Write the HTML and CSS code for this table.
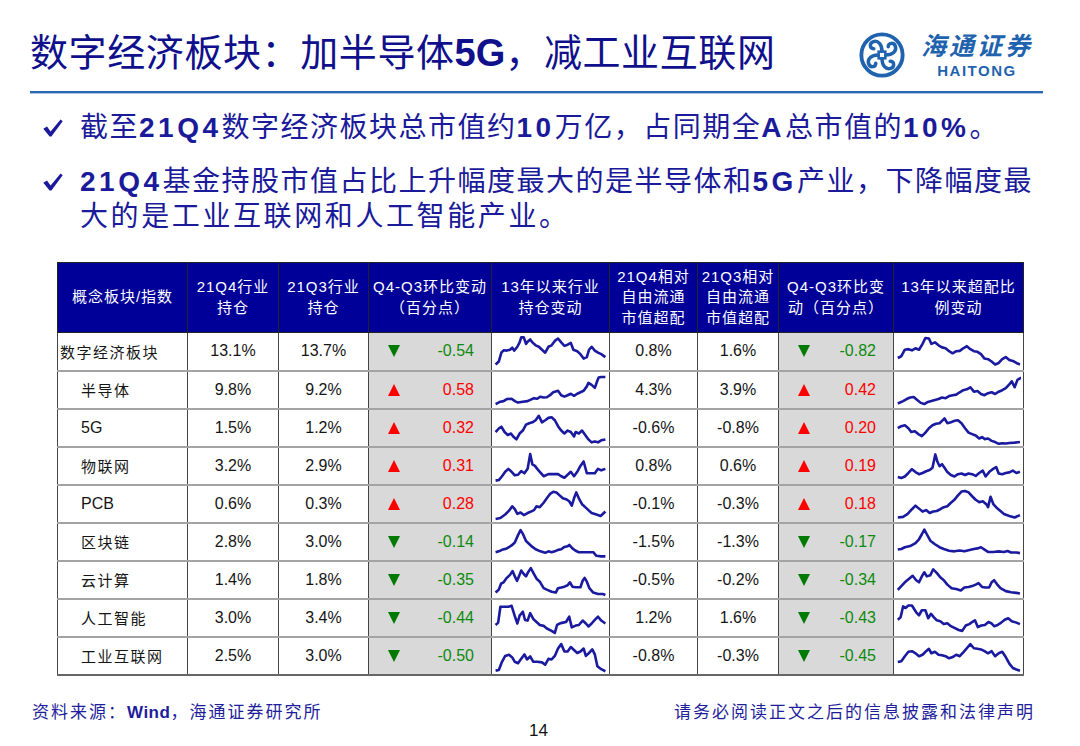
FILE: index.html
```html
<!DOCTYPE html>
<html lang="zh-CN">
<head>
<meta charset="utf-8">
<title>数字经济板块</title>
<link rel="stylesheet" href="styles.css">
</head>
<body>
<div class="slide">
  <header class="header">
    <h1 class="title">数字经济板块：加半导体<b>5G</b>，减工业互联网</h1>
    <div class="logo">
      <svg class="logo-mark" viewBox="0 0 50 50" width="48" height="48">
        <defs>
          <path id="arm" d="M25 21 C25 14 21 9.5 16 11 C11.5 12.5 12 18.5 16.5 18.5" fill="none" stroke="#1f63ae" stroke-width="3.6" stroke-linecap="round"/>
        </defs>
        <circle cx="25" cy="25" r="21.5" fill="none" stroke="#1f63ae" stroke-width="4"/>
        <use href="#arm"/>
        <use href="#arm" transform="rotate(90 25 25)"/>
        <use href="#arm" transform="rotate(180 25 25)"/>
        <use href="#arm" transform="rotate(270 25 25)"/>
        <rect x="21.5" y="21.5" width="7" height="7" fill="none" stroke="#1f63ae" stroke-width="2.6"/>
      </svg>
      <div class="logo-text">
        <div class="logo-cn">海通证券</div>
        <div class="logo-en">HAITONG</div>
      </div>
    </div>
  </header>
  <div class="rule"></div>

  <ul class="points">
    <li class="point">
      <svg class="check" viewBox="0 0 20 18" width="20" height="18"><path d="M0.3 9.8 L4 7.6 L7.6 12.6 L17.6 0.6 L19.7 2.2 L8.4 17.6 L6.6 17.6 Z" fill="#1a1a9a"/></svg>
      <p class="point-text">截至<span class="en">21Q4</span>数字经济板块总市值约<span class="en">10</span>万亿，占同期全<span class="en">A</span>总市值的<span class="en">10%</span>。</p>
    </li>
    <li class="point">
      <svg class="check" viewBox="0 0 20 18" width="20" height="18"><path d="M0.3 9.8 L4 7.6 L7.6 12.6 L17.6 0.6 L19.7 2.2 L8.4 17.6 L6.6 17.6 Z" fill="#1a1a9a"/></svg>
      <p class="point-text"><span class="en">21Q4</span>基金持股市值占比上升幅度最大的是半导体和<span class="en">5G</span>产业，下降幅度最<br><span class="wide">大的是工业互联网和人工智能产业。</span></p>
    </li>
  </ul>

  <table class="grid">
    <colgroup>
      <col class="c1"><col class="c2"><col class="c3"><col class="c4"><col class="c5">
      <col class="c6"><col class="c7"><col class="c8"><col class="c9">
    </colgroup>
    <thead>
      <tr>
        <th>概念板块/指数</th>
        <th>21Q4行业<br>持仓</th>
        <th>21Q3行业<br>持仓</th>
        <th>Q4-Q3环比变动<br>（百分点）</th>
        <th>13年以来行业<br>持仓变动</th>
        <th>21Q4相对<br>自由流通<br>市值超配</th>
        <th>21Q3相对<br>自由流通<br>市值超配</th>
        <th>Q4-Q3环比变<br>动（百分点）</th>
        <th>13年以来超配比<br>例变动</th>
      </tr>
    </thead>
    <tbody>
      <tr>
        <td class="name top">数字经济板块</td><td>13.1%</td><td>13.7%</td>
        <td class="chg"><div class="chg-in"><i class="tri down"></i><span class="neg">-0.54</span></div></td>
        <td class="spark"><svg viewBox="35 0 353 112" preserveAspectRatio="none"><polyline points="40,100 50,90 58,60 65,52 75,53 85,50 92,43 98,53 108,40 115,25 120,8 128,8 135,30 140,23 148,15 155,25 165,35 175,40 185,50 195,60 205,40 215,35 225,20 235,12 245,25 255,37 265,33 275,27 283,50 295,55 305,65 315,80 325,75 332,50 340,40 350,53 360,60 370,65 383,75"/></svg></td>
        <td>0.8%</td><td>1.6%</td>
        <td class="chg"><div class="chg-in"><i class="tri down"></i><span class="neg">-0.82</span></div></td>
        <td class="spark"><svg viewBox="35 0 353 112" preserveAspectRatio="none"><polyline points="40,78 50,72 60,50 70,48 80,52 90,45 100,50 110,30 118,10 128,12 135,30 145,25 155,35 165,42 175,45 185,55 195,62 205,55 215,54 225,45 235,38 245,48 255,55 265,57 275,65 285,80 295,82 305,90 315,100 325,95 335,82 345,75 355,85 365,88 375,95 385,100"/></svg></td>
      </tr>
      <tr>
        <td class="name">半导体</td><td>9.8%</td><td>9.2%</td>
        <td class="chg"><div class="chg-in"><i class="tri up"></i><span class="pos">0.58</span></div></td>
        <td class="spark"><svg viewBox="35 0 353 112" preserveAspectRatio="none"><polyline points="40,102 55,94 65,92 75,85 90,84 100,92 110,97 125,94 140,92 150,87 160,82 170,84 180,77 190,80 200,79 210,72 220,62 235,57 245,72 255,77 265,72 275,67 285,74 295,67 305,62 315,57 325,42 330,30 340,37 350,47 358,22 362,12 370,10 383,10"/></svg></td>
        <td>4.3%</td><td>3.9%</td>
        <td class="chg"><div class="chg-in"><i class="tri up"></i><span class="pos">0.42</span></div></td>
        <td class="spark"><svg viewBox="35 0 353 112" preserveAspectRatio="none"><polyline points="40,100 55,92 65,85 75,80 85,78 95,88 105,98 115,102 125,95 135,92 145,88 155,85 165,80 175,82 185,75 195,72 205,70 215,62 225,55 235,52 245,45 255,60 265,58 275,68 285,72 295,65 305,62 315,68 325,60 335,55 345,48 355,35 362,25 370,45 378,20 385,15 390,12"/></svg></td>
      </tr>
      <tr>
        <td class="name latin">5G</td><td>1.5%</td><td>1.2%</td>
        <td class="chg"><div class="chg-in"><i class="tri up"></i><span class="pos">0.32</span></div></td>
        <td class="spark"><svg viewBox="35 0 353 112" preserveAspectRatio="none"><polyline points="40,68 50,56 58,50 68,68 78,78 88,73 95,83 105,93 115,73 125,63 135,43 145,38 155,35 165,28 175,13 185,35 195,28 205,20 215,18 225,28 235,48 245,63 255,73 265,63 275,68 285,83 290,68 300,73 310,63 320,78 330,93 340,103 350,100 360,103 370,96 383,93"/></svg></td>
        <td>-0.6%</td><td>-0.8%</td>
        <td class="chg"><div class="chg-in"><i class="tri up"></i><span class="pos">0.20</span></div></td>
        <td class="spark"><svg viewBox="35 0 353 112" preserveAspectRatio="none"><polyline points="40,55 50,48 60,45 70,55 78,68 88,65 98,75 108,82 118,70 128,55 138,45 148,40 158,38 165,30 172,22 180,38 190,35 200,30 210,28 220,38 230,55 240,70 250,75 260,80 270,90 278,85 285,92 295,90 305,98 315,102 325,108 335,106 345,107 355,105 370,104 385,102"/></svg></td>
      </tr>
      <tr>
        <td class="name">物联网</td><td>3.2%</td><td>2.9%</td>
        <td class="chg"><div class="chg-in"><i class="tri up"></i><span class="pos">0.31</span></div></td>
        <td class="spark"><svg viewBox="35 0 353 112" preserveAspectRatio="none"><polyline points="40,104 50,102 60,89 70,74 80,64 90,74 100,86 110,84 120,72 130,79 140,64 148,14 155,49 163,54 170,64 178,74 190,89 205,82 220,82 235,82 245,89 255,94 265,84 275,74 285,89 295,74 305,54 315,39 325,79 340,79 350,79 360,64 370,69 383,64"/></svg></td>
        <td>0.8%</td><td>0.6%</td>
        <td class="chg"><div class="chg-in"><i class="tri up"></i><span class="pos">0.19</span></div></td>
        <td class="spark"><svg viewBox="35 0 353 112" preserveAspectRatio="none"><polyline points="40,92 50,95 60,90 70,78 80,65 90,75 100,82 110,78 120,72 130,68 138,60 146,15 152,40 158,55 165,48 172,60 180,75 190,85 200,90 210,82 220,80 230,85 240,80 250,82 260,88 270,78 280,70 288,90 298,75 308,65 318,58 325,80 335,82 345,78 355,76 365,70 375,78 385,74"/></svg></td>
      </tr>
      <tr>
        <td class="name latin">PCB</td><td>0.6%</td><td>0.3%</td>
        <td class="chg"><div class="chg-in"><i class="tri up"></i><span class="pos">0.28</span></div></td>
        <td class="spark"><svg viewBox="35 0 353 112" preserveAspectRatio="none"><polyline points="40,105 55,102 70,90 82,77 92,62 100,72 108,88 118,83 128,92 140,85 150,80 160,75 168,62 178,65 190,50 200,35 210,20 220,13 230,15 240,25 250,35 260,38 270,45 278,60 285,35 292,15 300,35 310,55 320,65 330,75 340,85 355,90 368,95 383,80"/></svg></td>
        <td>-0.1%</td><td>-0.3%</td>
        <td class="chg"><div class="chg-in"><i class="tri up"></i><span class="pos">0.18</span></div></td>
        <td class="spark"><svg viewBox="35 0 353 112" preserveAspectRatio="none"><polyline points="40,100 55,98 68,88 80,72 90,60 100,70 110,80 120,75 130,85 140,80 150,78 160,72 170,65 180,62 190,50 200,40 210,25 220,12 230,10 240,15 250,28 260,40 270,48 280,45 290,55 295,65 302,30 310,55 320,68 330,78 340,88 355,95 370,100 385,92"/></svg></td>
      </tr>
      <tr>
        <td class="name">区块链</td><td>2.8%</td><td>3.0%</td>
        <td class="chg"><div class="chg-in"><i class="tri down"></i><span class="neg">-0.14</span></div></td>
        <td class="spark"><svg viewBox="35 0 353 112" preserveAspectRatio="none"><polyline points="40,89 50,86 60,81 75,76 90,66 100,56 110,31 118,14 125,26 135,51 145,61 155,71 165,79 180,86 195,91 205,86 215,89 225,86 235,81 245,79 255,71 265,69 270,64 280,76 290,84 300,89 320,89 345,89 355,101 370,103 383,103"/></svg></td>
        <td>-1.5%</td><td>-1.3%</td>
        <td class="chg"><div class="chg-in"><i class="tri down"></i><span class="neg">-0.17</span></div></td>
        <td class="spark"><svg viewBox="35 0 353 112" preserveAspectRatio="none"><polyline points="40,80 50,78 60,72 75,68 90,58 100,45 108,28 115,12 122,28 132,50 145,62 158,72 170,78 185,84 200,86 215,83 228,86 240,82 255,78 265,76 275,72 285,80 295,88 310,88 325,86 340,88 350,85 360,90 375,90 385,92"/></svg></td>
      </tr>
      <tr>
        <td class="name">云计算</td><td>1.4%</td><td>1.8%</td>
        <td class="chg"><div class="chg-in"><i class="tri down"></i><span class="neg">-0.35</span></div></td>
        <td class="spark"><svg viewBox="35 0 353 112" preserveAspectRatio="none"><polyline points="40,97 50,87 57,67 65,62 75,47 85,37 93,24 100,42 107,57 113,42 120,22 128,34 135,42 142,27 150,14 160,34 168,50 178,60 190,82 200,87 215,94 228,97 235,82 245,80 255,77 265,72 272,62 280,77 290,79 305,79 312,57 318,47 325,60 333,82 345,97 360,102 375,102 383,105"/></svg></td>
        <td>-0.5%</td><td>-0.2%</td>
        <td class="chg"><div class="chg-in"><i class="tri down"></i><span class="neg">-0.34</span></div></td>
        <td class="spark"><svg viewBox="35 0 353 112" preserveAspectRatio="none"><polyline points="40,88 50,75 60,62 72,50 82,40 92,55 100,62 108,42 115,28 122,42 132,38 140,18 150,30 160,45 170,55 180,70 192,82 205,85 218,90 228,80 240,78 250,75 260,70 268,65 278,78 288,80 298,80 305,62 312,55 320,68 330,82 345,92 360,96 375,98 385,100"/></svg></td>
      </tr>
      <tr>
        <td class="name">人工智能</td><td>3.0%</td><td>3.4%</td>
        <td class="chg"><div class="chg-in"><i class="tri down"></i><span class="neg">-0.44</span></div></td>
        <td class="spark"><svg viewBox="35 0 353 112" preserveAspectRatio="none"><polyline points="40,78 48,70 55,16 65,16 80,16 90,13 100,48 108,73 115,46 125,33 132,61 140,63 148,38 158,58 168,68 178,78 190,81 200,90 215,98 225,105 232,78 240,73 250,70 260,68 270,50 278,86 290,80 300,78 312,63 322,73 330,83 340,73 352,58 360,50 370,63 383,73"/></svg></td>
        <td>1.2%</td><td>1.6%</td>
        <td class="chg"><div class="chg-in"><i class="tri down"></i><span class="neg">-0.43</span></div></td>
        <td class="spark"><svg viewBox="35 0 353 112" preserveAspectRatio="none"><polyline points="40,60 48,52 55,15 62,20 70,12 80,12 92,35 100,45 108,28 118,28 126,55 134,40 142,52 150,62 160,65 170,75 180,72 190,82 200,88 212,95 222,98 232,80 242,75 250,68 258,62 266,85 276,80 286,78 296,68 304,72 312,82 322,78 332,70 342,60 352,55 362,65 375,70 385,75"/></svg></td>
      </tr>
      <tr>
        <td class="name">工业互联网</td><td>2.5%</td><td>3.0%</td>
        <td class="chg"><div class="chg-in"><i class="tri down"></i><span class="neg">-0.50</span></div></td>
        <td class="spark"><svg viewBox="35 0 353 112" preserveAspectRatio="none"><polyline points="40,104 50,102 60,74 70,54 82,50 92,59 100,74 110,79 120,64 130,49 138,66 148,56 158,74 170,74 185,76 195,84 205,64 215,66 225,54 235,29 245,14 255,39 265,39 275,24 285,34 295,44 305,39 315,29 322,54 332,44 342,32 350,49 358,89 370,99 383,106"/></svg></td>
        <td>-0.8%</td><td>-0.3%</td>
        <td class="chg"><div class="chg-in"><i class="tri down"></i><span class="neg">-0.45</span></div></td>
        <td class="spark"><svg viewBox="35 0 353 112" preserveAspectRatio="none"><polyline points="40,75 50,72 60,55 70,40 80,38 90,45 100,55 110,50 120,38 128,30 135,45 145,40 155,50 165,52 175,55 185,62 195,58 205,50 215,55 225,42 235,28 245,14 255,28 265,30 275,32 285,38 295,45 305,38 315,55 325,45 335,40 345,58 355,80 365,95 375,100 385,104"/></svg></td>
      </tr>
    </tbody>
  </table>

  <footer class="footer">
    <div class="footer-row">
      <span class="source">资料来源：<b>Wind</b>，海通证券研究所</span>
      <span class="notice">请务必阅读正文之后的信息披露和法律声明</span>
    </div>
    <div class="pageno">14</div>
  </footer>
</div>
</body>
</html>
```

FILE: styles.css
```css
html, body {
  margin: 0;
  padding: 0;
  background: #ffffff;
}

body {
  width: 1080px;
  height: 746px;
  overflow: hidden;
  font-family: "Liberation Sans", "Noto Sans CJK SC", sans-serif;
}

.slide {
  width: 1080px;
  height: 746px;
}

/* ---------- header ---------- */
.header {
  display: flex;
  justify-content: space-between;
  align-items: center;
  height: 77px;
  padding: 14px 47px 0 30px;
}

.title {
  margin: 0;
  font-size: 38px;
  line-height: 44px;
  font-weight: 400;
  color: #10108c;
  letter-spacing: 0.6px;
  white-space: nowrap;
}

.title b {
  font-weight: 700;
  letter-spacing: 0;
}

.logo {
  display: flex;
  align-items: center;
  gap: 15px;
}

.logo-mark {
  display: block;
  margin-top: 5px;
}

.logo-text {
  display: flex;
  flex-direction: column;
  align-items: center;
}

.logo-cn {
  font-family: "Noto Sans CJK SC", sans-serif;
  font-size: 25px;
  line-height: 36px;
  font-weight: 700;
  color: #1f63ae;
  letter-spacing: 3px;
  font-style: italic;
}

.logo-en {
  font-size: 15px;
  line-height: 17px;
  font-weight: 700;
  color: #1f63ae;
  letter-spacing: 1.5px;
}

.rule {
  margin: 0 37px 0 30px;
  height: 2px;
  background: #2a67b1;
  border-bottom: 1px solid #a9c4e4;
}

/* ---------- bullet points ---------- */
.points {
  list-style: none;
  margin: 16px 0 0;
  padding: 0 20px 0 43px;
}

.point {
  display: flex;
  align-items: flex-start;
  margin-bottom: 19px;
}

.point:last-child {
  margin-bottom: 0;
}

.check {
  flex: none;
  margin: 9px 17px 0 0;
}

.point-text {
  margin: 0;
  font-size: 28px;
  line-height: 35px;
  color: #1a1a9a;
  letter-spacing: 1.5px;
  white-space: nowrap;
}

.point-text .en {
  font-weight: 700;
  letter-spacing: 3.5px;
}

.point-text .wide {
  letter-spacing: 2.6px;
}

/* ---------- table ---------- */
.grid {
  margin: 28px 0 0 57px;
  width: 966px;
  table-layout: fixed;
  border-collapse: collapse;
  border: 1px solid #777;
}

.c1 { width: 130px; }
.c2 { width: 91px; }
.c3 { width: 90px; }
.c4 { width: 123px; }
.c5 { width: 118px; }
.c6 { width: 88px; }
.c7 { width: 81px; }
.c8 { width: 115px; }
.c9 { width: 130px; }

.grid thead tr {
  height: 70px;
}

.grid th {
  background: #000099;
  color: #ffffff;
  font-weight: 400;
  font-size: 15px;
  line-height: 20.5px;
  letter-spacing: 1px;
  border: 1px solid #222;
  padding: 0;
  text-align: center;
  vertical-align: middle;
}

.grid tbody tr {
  height: 38px;
}

.grid td {
  padding: 0;
  font-size: 16px;
  color: #151515;
  text-align: center;
  vertical-align: middle;
  border-left: 1px solid #444;
  border-right: 1px solid #444;
  border-bottom: 2px solid #a4a4a4;
}

.grid tbody tr:last-child td {
  border-bottom: 2px solid #666;
}

.grid td.name {
  text-align: left;
  font-size: 15px;
  letter-spacing: 1.5px;
  padding-left: 23px;
}

.grid td.name.latin {
  font-size: 16px;
  letter-spacing: 0;
}

.grid td.name.top {
  padding-left: 2px;
}

.grid td.chg {
  background: #d9d9d9;
}

.chg-in {
  display: flex;
  align-items: center;
  justify-content: space-between;
  padding: 0 17px 0 19px;
}

.tri {
  display: block;
  width: 0;
  height: 0;
  border-left: 6.5px solid transparent;
  border-right: 6.5px solid transparent;
}

.tri.up {
  border-bottom: 12px solid #ff0000;
}

.tri.down {
  border-top: 12px solid #007a00;
}

.pos {
  color: #ff0000;
}

.neg {
  color: #0e8a0e;
}

.grid td.spark {
  padding: 2px 2px 1px;
}

.spark svg {
  display: block;
  width: 100%;
  height: 33px;
}

.spark polyline {
  fill: none;
  stroke: #1a1aa0;
  stroke-width: 2.6px;
  stroke-linejoin: round;
  vector-effect: non-scaling-stroke;
}

/* ---------- footer ---------- */
.footer {
  margin-top: 26px;
  padding: 0 45px 0 32px;
}

.footer-row {
  display: flex;
  justify-content: space-between;
  font-size: 17px;
  line-height: 22px;
  color: #1e1e9c;
  letter-spacing: 2px;
}

.footer-row b {
  font-weight: 700;
  letter-spacing: 0.5px;
}

.pageno {
  margin-top: -3px;
  text-align: center;
  font-size: 17px;
  line-height: 20px;
  color: #111;
  padding-left: 10px;
}
```
